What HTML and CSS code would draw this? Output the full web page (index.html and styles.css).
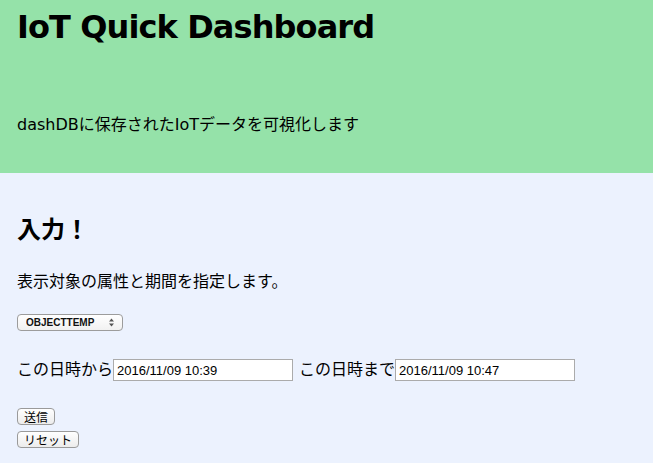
FILE: index.html
```html
<!DOCTYPE html>
<html lang="ja">
<head>
<meta charset="utf-8">
<title>IoT Quick Dashboard</title>
<link rel="stylesheet" href="styles.css">
</head>
<body>
<header class="hero">
  <h1 class="hero-title">IoT Quick Dashboard</h1>
  <p class="hero-sub">dashDBに保存されたIoTデータを可視化します</p>
</header>
<main class="content">
  <h2 class="section-title">入力！</h2>
  <p class="lead">表示対象の属性と期間を指定します。</p>
  <form class="form">
    <div class="select-wrap">
      <select class="select">
        <option>OBJECTTEMP</option>
        <option>AMBIENTTEMP</option>
        <option>HUMIDITY</option>
      </select>
      <svg class="select-arrows" width="7" height="9" viewBox="0 0 7 9"><path d="M3.5 0.5 L6 3.5 H1 Z M3.5 8.5 L6 5.5 H1 Z" fill="#555"/></svg>
    </div>
    <div class="date-row">
      <label class="date-label">この日時から</label><input class="date-input" type="text" value="2016/11/09 10:39">
      <label class="date-label second">この日時まで</label><input class="date-input" type="text" value="2016/11/09 10:47">
    </div>
    <div class="buttons">
      <button type="button" class="btn">送信</button>
      <button type="reset" class="btn">リセット</button>
    </div>
  </form>
</main>
</body>
</html>
```

FILE: styles.css
```css
html, body {
  margin: 0;
  padding: 0;
  background: #ecf2fe;
  color: #000;
  font-family: "DejaVu Sans", "Noto Sans CJK JP", sans-serif;
}

.hero {
  background: #95e2a9;
  height: 173px;
  padding: 0 17px;
  box-sizing: border-box;
  overflow: hidden;
}

.hero-title {
  margin: 0;
  padding-top: 7px;
  font-size: 32px;
  line-height: 40px;
  font-weight: bold;
  letter-spacing: -0.9px;
}

.hero-sub {
  margin: 68px 0 0;
  font-size: 16px;
  line-height: 20px;
}

.content {
  padding: 0 17px;
}

.section-title {
  margin: 0;
  padding-top: 42px;
  font-size: 24px;
  line-height: 30px;
  font-weight: bold;
}

.lead {
  margin: 27px 0 0;
  font-size: 16px;
  line-height: 20px;
}

.form {
  margin: 0;
}

.select-wrap {
  position: relative;
  display: inline-block;
  margin-top: 22px;
  vertical-align: top;
}

.select {
  -webkit-appearance: none;
  appearance: none;
  display: block;
  width: 106px;
  height: 17px;
  margin: 0;
  padding: 0 0 0 8px;
  box-sizing: border-box;
  border: 1px solid #9c9c9c;
  border-radius: 4px;
  background: linear-gradient(#ffffff, #f1f1f1);
  font-family: "Liberation Sans", "Noto Sans CJK JP", sans-serif;
  font-size: 10px;
  font-weight: bold;
  line-height: 15px;
  color: #111;
}

.select-arrows {
  position: absolute;
  right: 8px;
  top: 4px;
}

.date-row {
  display: flex;
  align-items: center;
  margin-top: 28px;
  height: 22px;
}

.date-label {
  font-size: 16px;
  line-height: 20px;
}

.date-label.second {
  margin-left: 6px;
}

.date-input {
  width: 180px;
  height: 22px;
  margin: 0;
  padding: 0 3px;
  box-sizing: border-box;
  border: 1px solid #ababab;
  background: #fff;
  font-family: "Liberation Sans", "Noto Sans CJK JP", sans-serif;
  font-size: 13px;
  color: #000;
  outline: none;
}

.buttons {
  display: flex;
  flex-direction: column;
  align-items: flex-start;
  gap: 6px;
  margin-top: 27px;
}

.btn {
  height: 17px;
  margin: 0;
  padding: 0 6px;
  box-sizing: border-box;
  border: 1px solid #9a9a9a;
  border-radius: 4px;
  background: linear-gradient(#ffffff, #ececec);
  font-family: "Noto Sans CJK JP", sans-serif;
  font-size: 12px;
  line-height: 14px;
  color: #000;
}
```
